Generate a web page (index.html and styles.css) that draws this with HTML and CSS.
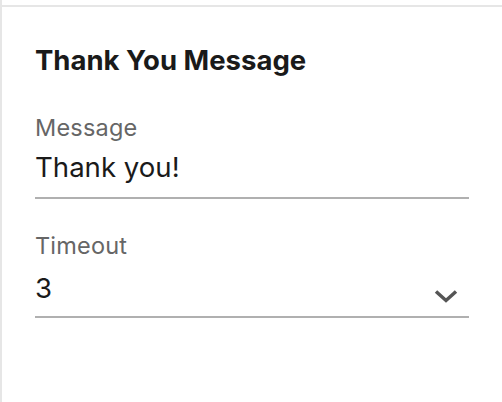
FILE: index.html
```html
<!DOCTYPE html>
<html>
<head>
<meta charset="utf-8">
<link rel="stylesheet" href="styles.css">
</head>
<body>
<div class="page">
  <div class="divider"></div>
  <div class="panel">
    <h2 class="title">Thank You Message</h2>
    <div class="field field-first">
      <div class="label">Message</div>
      <div class="value">Thank you!</div>
    </div>
    <div class="field">
      <div class="label">Timeout</div>
      <div class="value value-select">
        <span>3</span>
        <svg class="chevron" width="24" height="14" viewBox="0 0 24 14"><path d="M2 2.5 L12 11.5 L22 2.5" fill="none" stroke="#555" stroke-width="3.5"/></svg>
      </div>
    </div>
  </div>
</div>
</body>
</html>
```
FILE: styles.css
```css
html, body {
  margin: 0;
  padding: 0;
  background: #fff;
}
body {
  font-family: Inter, "Noto Sans", sans-serif;
  color: #1a1a1a;
}
.page {
  border-left: 2px solid #e6e6e6;
  height: 402px;
  box-sizing: border-box;
  padding-top: 5px;
}
.divider {
  height: 2px;
  background: #e6e6e6;
  margin-left: -2px;
}
.panel {
  padding: 0 33px;
}
.title {
  margin: 37px 0 0;
  font-size: 27.5px;
  line-height: 32px;
  font-weight: 700;
  color: #1a1a1a;
}
.field {
  border-bottom: 2px solid #b0b0b0;
  margin-top: 33px;
}
.field-first {
  margin-top: 38px;
}
.label {
  font-size: 23.5px;
  line-height: 28px;
  letter-spacing: 0.2px;
  color: #666;
}
.value {
  font-size: 27.6px;
  line-height: 34px;
  margin-top: 8px;
  padding-bottom: 13px;
  color: #1a1a1a;
}
.value-select {
  display: flex;
  justify-content: space-between;
  margin-top: 11px;
  padding-bottom: 11px;
  padding-right: 11px;
}
.chevron {
  display: block;
  align-self: flex-end;
  margin-bottom: 2px;
}
```
